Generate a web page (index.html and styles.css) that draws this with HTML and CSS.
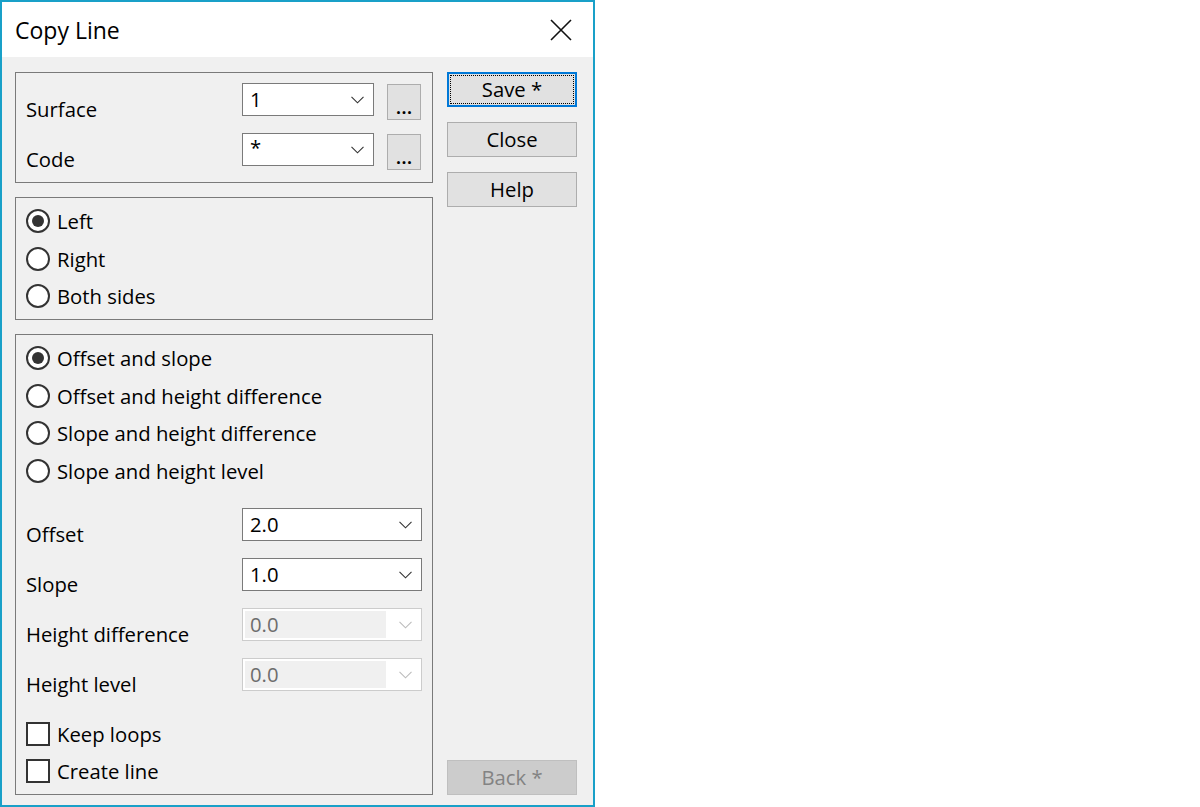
FILE: index.html
```html
<!DOCTYPE html>
<html>
<head>
<meta charset="utf-8">
<title>Copy Line</title>
<link rel="stylesheet" href="styles.css">
</head>
<body>
<div class="window">
  <div class="titlebar">
    <span class="title">Copy Line</span>
    <svg class="close" width="22" height="22" viewBox="0 0 22 22"><path d="M1 1 L21 21 M21 1 L1 21" stroke="#111" stroke-width="1.6" fill="none"/></svg>
  </div>
  <div class="body">
    <div class="left">
      <div class="group g1">
        <div class="field">
          <span class="label">Surface</span>
          <div class="combo short"><span class="val">1</span><svg class="chev" width="13" height="8" viewBox="0 0 13 8"><path d="M0.5 0.8 L6.5 6.8 L12.5 0.8" stroke="#333" stroke-width="1.1" fill="none"/></svg></div>
          <button class="dots">...</button>
        </div>
        <div class="field">
          <span class="label">Code</span>
          <div class="combo short"><span class="val star">*</span><svg class="chev" width="13" height="8" viewBox="0 0 13 8"><path d="M0.5 0.8 L6.5 6.8 L12.5 0.8" stroke="#333" stroke-width="1.1" fill="none"/></svg></div>
          <button class="dots">...</button>
        </div>
      </div>

      <div class="group g2">
        <div class="opt"><span class="radio on"></span><span class="otext">Left</span></div>
        <div class="opt"><span class="radio"></span><span class="otext">Right</span></div>
        <div class="opt"><span class="radio"></span><span class="otext">Both sides</span></div>
      </div>

      <div class="group g3">
        <div class="radios">
          <div class="opt"><span class="radio on"></span><span class="otext">Offset and slope</span></div>
          <div class="opt"><span class="radio"></span><span class="otext">Offset and height difference</span></div>
          <div class="opt"><span class="radio"></span><span class="otext">Slope and height difference</span></div>
          <div class="opt"><span class="radio"></span><span class="otext">Slope and height level</span></div>
        </div>
        <div class="fields">
          <div class="field">
            <span class="label">Offset</span>
            <div class="combo wide"><span class="val">2.0</span><svg class="chev" width="13" height="8" viewBox="0 0 13 8"><path d="M0.5 0.8 L6.5 6.8 L12.5 0.8" stroke="#333" stroke-width="1.1" fill="none"/></svg></div>
          </div>
          <div class="field">
            <span class="label">Slope</span>
            <div class="combo wide"><span class="val">1.0</span><svg class="chev" width="13" height="8" viewBox="0 0 13 8"><path d="M0.5 0.8 L6.5 6.8 L12.5 0.8" stroke="#333" stroke-width="1.1" fill="none"/></svg></div>
          </div>
          <div class="field">
            <span class="label">Height difference</span>
            <div class="combo wide disabled"><span class="val">0.0</span><svg class="chev" width="13" height="8" viewBox="0 0 13 8"><path d="M0.5 0.8 L6.5 6.8 L12.5 0.8" stroke="#bcbcbc" stroke-width="1.1" fill="none"/></svg></div>
          </div>
          <div class="field">
            <span class="label">Height level</span>
            <div class="combo wide disabled"><span class="val">0.0</span><svg class="chev" width="13" height="8" viewBox="0 0 13 8"><path d="M0.5 0.8 L6.5 6.8 L12.5 0.8" stroke="#bcbcbc" stroke-width="1.1" fill="none"/></svg></div>
          </div>
        </div>
        <div class="checks">
          <div class="opt chk"><span class="check"></span><span class="otext">Keep loops</span></div>
          <div class="opt chk"><span class="check"></span><span class="otext">Create line</span></div>
        </div>
      </div>
    </div>

    <div class="right">
      <button class="btn default">Save *</button>
      <button class="btn">Close</button>
      <button class="btn">Help</button>
      <div class="spacer"></div>
      <button class="btn disabled">Back *</button>
    </div>
  </div>
</div>
</body>
</html>
```

FILE: styles.css
```css
html, body {
  margin: 0;
  padding: 0;
  background: #ffffff;
}

body {
  font-family: "Open Sans", "Noto Sans", "Liberation Sans", sans-serif;
  font-size: 20.3px;
  color: #000;
}

.window {
  width: 595px;
  height: 807px;
  box-sizing: border-box;
  border: 2px solid #19a0c8;
  display: flex;
  flex-direction: column;
  background: #f0f0f0;
}

.titlebar {
  height: 55px;
  flex: none;
  background: #ffffff;
  display: flex;
  align-items: center;
  justify-content: space-between;
}

.title {
  font-size: 23px;
  margin-left: 13px;
  margin-top: 1px;
  color: #000;
}

.close {
  margin-right: 21px;
  margin-top: 1px;
}

.body {
  flex: 1;
  display: flex;
  padding: 15px 0 10px 13px;
  box-sizing: border-box;
}

.left {
  width: 418px;
  display: flex;
  flex-direction: column;
  gap: 14px;
}

.group {
  border: 1px solid #7a7a7a;
  box-sizing: border-box;
  padding-left: 10px;
}

.g1 {
  height: 111px;
  padding-top: 10px;
}

.g2 {
  height: 123px;
  padding-top: 4.5px;
}

.g3 {
  height: 461px;
  padding-top: 4.5px;
}

.field {
  height: 50px;
  display: flex;
  align-items: flex-start;
}

.label {
  width: 216px;
  flex: none;
  line-height: 24px;
  padding-top: 13.5px;
}

.combo {
  position: relative;
  height: 33px;
  box-sizing: border-box;
  border: 1px solid #7a7a7a;
  background: #fff;
  display: flex;
  align-items: center;
  flex: none;
}

.combo.short { width: 132px; }
.combo.wide { width: 180px; }

.val {
  padding-left: 7px;
  line-height: 31px;
}

.val.star {
  align-self: flex-start;
  line-height: 24px;
  padding-top: 1px;
}

.chev {
  position: absolute;
  right: 9px;
  top: 12px;
}

.combo.disabled {
  border-color: #cccccc;
}

.combo.disabled::before {
  content: "";
  position: absolute;
  left: 2px;
  top: 2px;
  bottom: 2px;
  right: 35px;
  background: #f0f0f0;
}

.combo.disabled .val {
  position: relative;
  color: #6d6d6d;
}

.dots {
  margin-left: 13px;
  margin-top: 1px;
  width: 34px;
  height: 36px;
  box-sizing: border-box;
  border: 1px solid #adadad;
  background: #e1e1e1;
  font-family: inherit;
  font-size: 20px;
  font-weight: 600;
  line-height: 20px;
  padding: 9px 0 0 0;
  color: #000;
}

.opt {
  height: 37.5px;
  display: flex;
  align-items: center;
}

.radio {
  width: 24px;
  height: 24px;
  box-sizing: border-box;
  border: 2px solid #333;
  border-radius: 50%;
  background: #fff;
  display: flex;
  align-items: center;
  justify-content: center;
  flex: none;
}

.radio.on::after {
  content: "";
  width: 12px;
  height: 12px;
  border-radius: 50%;
  background: #333;
}

.otext {
  margin-left: 7px;
  line-height: 24px;
}

.fields {
  margin-top: 18.5px;
}

.checks {
  margin-top: 7.5px;
}

.opt.chk {
  height: 37px;
}

.check {
  width: 24px;
  height: 24px;
  box-sizing: border-box;
  border: 2px solid #333;
  background: #fff;
  flex: none;
}

.right {
  width: 130px;
  margin-left: 14px;
  display: flex;
  flex-direction: column;
  gap: 15px;
}

.spacer {
  flex: 1;
}

.btn {
  position: relative;
  height: 35px;
  width: 130px;
  box-sizing: border-box;
  border: 1px solid #adadad;
  background: #e1e1e1;
  font-family: inherit;
  font-size: 20.3px;
  color: #000;
  padding: 0;
  line-height: 33px;
}

.btn.default {
  border: 2px solid #0078d7;
  line-height: 31px;
}

.btn.default::after {
  content: "";
  position: absolute;
  left: 1px;
  top: 1px;
  right: 1px;
  bottom: 1px;
  border: 1px dotted #000;
}

.btn.disabled {
  background: #cccccc;
  border-color: #bfbfbf;
  color: #838383;
}
```
